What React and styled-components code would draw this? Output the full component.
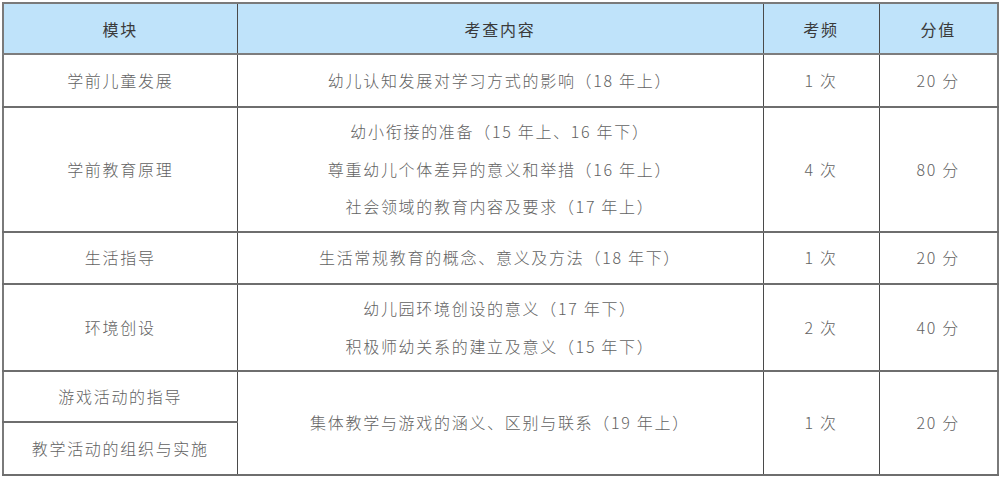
import React from "react";
import styled, { createGlobalStyle } from "styled-components";

const GlobalStyle = createGlobalStyle`
  body {
    margin: 0;
    background: #ffffff;
    font-family: "Noto Sans CJK SC", "Noto Sans", sans-serif;
  }
`;

const Page = styled.div`
  padding: 2px 3px 4px 2px;
`;

const Table = styled.table`
  width: 995px;
  border-collapse: collapse;
  table-layout: fixed;
  border: 2px solid #7a7a7a;
  font-size: 16px;
  font-weight: 300;
  letter-spacing: 1.7px;
  color: #626262;
`;

const HeadCell = styled.th`
  background: #bfe3fa;
  color: #3a3a3a;
  font-weight: 400;
  height: 49px;
  padding: 0;
  text-align: center;
  border-right: 1px solid #4a4a4a;
  border-bottom: 2px solid #7d7d7d;
`;

const Cell = styled.td`
  height: ${(p) => p.$h}px;
  padding: 0;
  text-align: center;
  vertical-align: middle;
  border-right: 1px solid #4a4a4a;
  border-bottom: 2px solid #6e6e6e;
  line-height: 37.5px;
`;

const Line = styled.div`
  white-space: nowrap;
`;

const rows = [
  {
    module: "学前儿童发展",
    items: ["幼儿认知发展对学习方式的影响（18 年上）"],
    freq: "1 次",
    score: "20 分",
    h: 51,
  },
  {
    module: "学前教育原理",
    items: [
      "幼小衔接的准备（15 年上、16 年下）",
      "尊重幼儿个体差异的意义和举措（16 年上）",
      "社会领域的教育内容及要求（17 年上）",
    ],
    freq: "4 次",
    score: "80 分",
    h: 123,
  },
  {
    module: "生活指导",
    items: ["生活常规教育的概念、意义及方法（18 年下）"],
    freq: "1 次",
    score: "20 分",
    h: 50,
  },
  {
    module: "环境创设",
    items: ["幼儿园环境创设的意义（17 年下）", "积极师幼关系的建立及意义（15 年下）"],
    freq: "2 次",
    score: "40 分",
    h: 85,
  },
];

export default function App() {
  return (
    <Page>
      <GlobalStyle />
      <Table>
        <colgroup>
          <col style={{ width: 234 }} />
          <col style={{ width: 526 }} />
          <col style={{ width: 116 }} />
          <col style={{ width: 119 }} />
        </colgroup>
        <thead>
          <tr>
            <HeadCell>模块</HeadCell>
            <HeadCell>考查内容</HeadCell>
            <HeadCell>考频</HeadCell>
            <HeadCell>分值</HeadCell>
          </tr>
        </thead>
        <tbody>
          {rows.map((r) => (
            <tr key={r.module}>
              <Cell $h={r.h}>{r.module}</Cell>
              <Cell $h={r.h}>
                {r.items.map((t) => (
                  <Line key={t}>{t}</Line>
                ))}
              </Cell>
              <Cell $h={r.h}>{r.freq}</Cell>
              <Cell $h={r.h}>{r.score}</Cell>
            </tr>
          ))}
          <tr>
            <Cell $h={49}>游戏活动的指导</Cell>
            <Cell $h={49} rowSpan={2}>
              集体教学与游戏的涵义、区别与联系（19 年上）
            </Cell>
            <Cell $h={49} rowSpan={2}>1 次</Cell>
            <Cell $h={49} rowSpan={2}>20 分</Cell>
          </tr>
          <tr>
            <Cell $h={51}>教学活动的组织与实施</Cell>
          </tr>
        </tbody>
      </Table>
    </Page>
  );
}
